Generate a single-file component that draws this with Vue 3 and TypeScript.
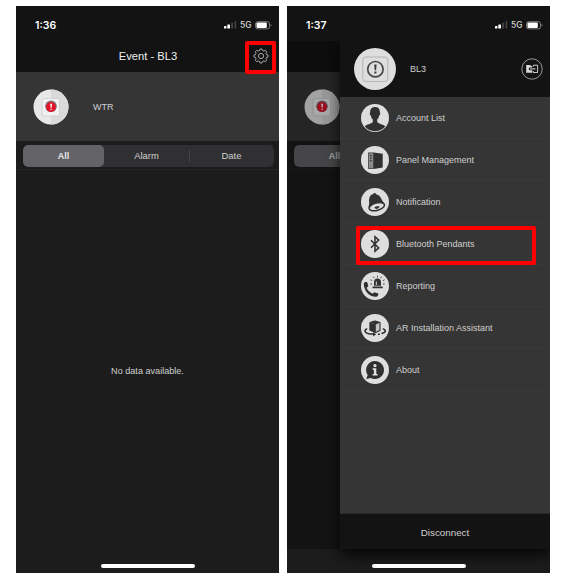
<script setup lang="ts">
type IconName = 'account' | 'panel' | 'bell' | 'bluetooth' | 'report' | 'ar' | 'about'

interface MenuItem {
  label: string
  icon: IconName
  marked?: boolean
}

const menu: MenuItem[] = [
  { label: 'Account List', icon: 'account' },
  { label: 'Panel Management', icon: 'panel' },
  { label: 'Notification', icon: 'bell' },
  { label: 'Bluetooth Pendants', icon: 'bluetooth', marked: true },
  { label: 'Reporting', icon: 'report' },
  { label: 'AR Installation Assistant', icon: 'ar' },
  { label: 'About', icon: 'about' },
]

interface Phone {
  time: string
  tabs: string[]
  drawer: boolean
}

// With the drawer open only the first filter tab stays visible.
const phones: Phone[] = [
  { time: '1:36', tabs: ['All', 'Alarm', 'Date'], drawer: false },
  { time: '1:37', tabs: ['All'], drawer: true },
]
</script>

<template>
  <main class="page">
    <section v-for="phone in phones" :key="phone.time" class="phone" :class="{ dimmed: phone.drawer }">
      <div class="status">
        <span class="time">{{ phone.time }}</span>
        <svg class="signal" width="13" height="8" viewBox="0 0 13 8">
          <rect x="0" y="5" width="2.4" height="2.6" rx=".4" fill="#fff" />
          <rect x="3.300" y="3.600" width="2.700" height="4" rx=".4" fill="#fff" />
          <rect x="7.200" y="1.800" width="1.900" height="5.800" rx=".5" fill="#444" />
          <rect x="10.600" y="0" width="1.600" height="7.600" rx=".5" fill="#444" />
        </svg>
        <span class="net">5G</span>
        <svg class="battery" width="17" height="9" viewBox="0 0 17 9">
          <rect x=".5" y=".7" width="14" height="7.2" rx="2.2" fill="none" stroke="#888" stroke-width=".9" />
          <rect x="1.5" y="1.5" width="10.3" height="5.6" rx="1.1" fill="#fff" />
          <path d="M15.6 3v2.7q1-.4 1-1.35T15.6 3" fill="#777" />
        </svg>
      </div>

      <div class="screen">
        <header class="titlebar">
          <h1 v-if="!phone.drawer">Event - BL3</h1>
          <div v-if="!phone.drawer" class="gear-box">
            <svg width="16" height="16" viewBox="0 0 16 16" fill="none" stroke="#b5b5b5" stroke-width=".9">
              <path
                stroke-linejoin="round"
                d="M7 1h2l.4 1.500 1.500.6 1.400-.8 1.400 1.400-.8 1.400.6 1.500L15 7v2l-1.500.4-.6 1.500.8 1.400-1.400 1.400-1.400-.8-1.500.6L9 15H7l-.4-1.500-1.500-.6-1.400.8-1.400-1.400.8-1.400-.6-1.500L1 9V7l1.500-.4.6-1.500-.8-1.400 1.400-1.400 1.400.8 1.500-.6z"
              />
              <circle cx="8" cy="8" r="2.6" />
            </svg>
          </div>
        </header>

        <div class="device">
          <svg width="36" height="36" viewBox="0 0 36 36">
            <circle cx="18" cy="18" r="17.5" fill="#e8e8e8" />
            <path d="M18 .5a17.5 17.5 0 0 1 0 35z" fill="#dadada" />
            <rect x="9" y="9.5" width="17.5" height="17.5" rx="2" fill="#f1f1f1" stroke="#c9c9c9" stroke-width=".7" />
            <circle cx="18" cy="17.3" r="5.8" fill="#777" />
            <circle cx="18" cy="18" r="4.9" fill="#e5142d" />
            <path d="M17.2 14.7h1.9l-.5 4h-1zM17.5 19.8h1.2V21h-1.2z" fill="#fff" />
          </svg>
          <span v-if="!phone.drawer">WTR</span>
        </div>

        <div class="filter">
          <div class="segments">
            <span v-for="tab in phone.tabs" :key="tab" class="segment">{{ tab }}</span>
          </div>
        </div>

        <div class="empty"><span v-if="!phone.drawer">No data available.</span></div>
      </div>

      <div class="home"><i></i></div>

      <aside v-if="phone.drawer" class="drawer">
        <div class="profile">
          <svg width="42" height="42" viewBox="0 0 42 42">
            <circle cx="21" cy="21" r="21" fill="#dedede" />
            <rect x="8.8" y="9" width="25" height="24.5" rx="3" fill="none" stroke="#b5b5b5" />
            <circle cx="21.4" cy="21.2" r="7.7" fill="none" stroke="#484848" stroke-width="1.7" />
            <path d="M20.2 16.6h2.4l-.5 5.6h-1.4zM20.4 23.4h2v2h-2z" fill="#383838" />
          </svg>
          <span>BL3</span>
          <svg class="switch" width="22" height="22" viewBox="0 0 22 22">
            <circle cx="11" cy="11" r="10.2" fill="none" stroke="#a6a6a6" stroke-width=".9" />
            <path d="M5.200 7h4l.8 1h1.200v1.600H9.300q-1.600 0-1.600 1.300t1.600 1.300h1.900v2.500h-6z" fill="#d8d8d8" />
            <path d="M12.300 8.700V7.200h4.300v7.300h-4.300V13" fill="none" stroke="#ccc" stroke-width="1" />
            <path d="M9 10.900h5.500" stroke="#ccc" stroke-width="1.100" />
          </svg>
        </div>

        <nav class="menu">
          <div v-for="item in menu" :key="item.icon" class="item" :class="{ marked: item.marked }">
            <svg width="28" height="28" viewBox="0 0 28 28">
              <circle cx="14" cy="14" r="14" fill="#dedede" />
              <g v-if="item.icon === 'account'" fill="#303030">
                <path d="M14 3c-3.4 0-5.2 2.1-4.8 5.500-.8.2-.4 2.700.6 3 .3 2 1.100 3.200 2 4v2.400c-1.700 2.200-5.800 2.200-8.200 4.400 5.200 6.500 15.600 6.500 20.800 0-2.400-2.200-6.500-2.200-8.200-4.400v-2.400c.9-.8 1.700-2 2-4 1-.3 1.400-2.800.6-3C19.200 5.100 17.400 3 14 3z" />
              </g>
              <g v-else-if="item.icon === 'panel'">
                <rect x="7.500" y="6.900" width="5" height="15.600" fill="#8a8a8a" stroke="#404040" stroke-width=".8" />
                <path d="M9 9h1.600v1.200H9zm0 2.500h1.600v1.200H9zm0 2.500h1.600v1.200H9z" fill="#333" />
                <path d="M12.600 6.400 21.700 7.800v13.700l-9.100 1.500z" fill="#303030" />
              </g>
              <g v-else-if="item.icon === 'bell'">
                <path d="M7.800 20.200c-.8-1.500.7-2.800.4-5.600C7.700 9.600 9 6.900 12.200 6c.3-1.400 2.600-1.200 2.900.2 4 .9 4.900 4 6.200 6.600.9 1.600 2.600 2.200 2.400 4z" fill="#303030" />
                <ellipse cx="15.800" cy="18.700" rx="7.900" ry="3.700" transform="rotate(-15 15.800 18.700)" fill="#dedede" stroke="#303030" stroke-width="1.500" />
                <path d="M13.300 19.600c1.300-1.300 3.900-1.700 5.400-1-1 2.600-4.500 3.200-5.400 1z" fill="#303030" />
              </g>
              <path v-else-if="item.icon === 'bluetooth'" d="m10 10.300 7.700 7.600-3.700 3.400V6.700l3.700 3.400-7.700 7.600" fill="none" stroke="#303030" stroke-width="1.500" />
              <g v-else-if="item.icon === 'report'">
                <path d="M2.800 11.200c.5-1 1.900-1.500 3.300-1.100l1.300 4.200-1.800 1.500c1.100 2.700 3.200 4.700 5.900 5.900l1.700-1.500 4.100 1.400c.2 1.700-.4 2.900-1.900 3.100C8.600 25.200 2.500 18.600 2.800 11.200z" fill="#303030" />
                <path d="M13 13.800V10a3.500 3.500 0 0 1 7 0v3.800zM11.500 14.600h10.200v1.700H11.500z" fill="#303030" />
                <path d="M15.300 13V9.600" stroke="#ddd" stroke-width="1" />
                <path d="M16.500 3.700v1.700M12.400 4.700l.9 1.500M20.600 4.700l-.9 1.500M9.500 7.800l1.600.8M23.500 7.800l-1.600.8M9.400 12h1.600M22 12h1.600" stroke="#303030" stroke-width=".9" />
              </g>
              <g v-else-if="item.icon === 'ar'">
                <path d="m14 7 5 1.600v7.900l-4.300 2-5.700-2.200V8.600z" fill="#c4c4c4" stroke="#303030" stroke-width="1.100" stroke-linejoin="round" />
                <path d="m8.800 8.800 6 1.800v8l-6-2.300zM14 7l5 1.600-4.200 1.900L9 8.600z" fill="#303030" />
                <path d="M6.200 14.600C2.600 16.200 3.300 19 8.800 20.100h3.800M16.900 20.200h2M20.500 19.600c4.600-1.100 5-3.400 1.300-5" fill="none" stroke="#303030" stroke-width="1.500" />
                <path d="m12 17.900 3.200 2.300-3.200 2.300z" fill="#303030" />
              </g>
              <g v-else>
                <path d="M14 5a9 9 0 1 1-4.300 16.900L5.200 23l1.500-3.900A9 9 0 0 1 14 5z" fill="#303030" />
                <circle cx="14" cy="9.600" r="1.600" fill="#e2e2e2" />
                <path d="M11.700 12.200h3.600v5.700h1.300v1.700h-5v-1.700h1.300v-4h-1.200z" fill="#e2e2e2" />
              </g>
            </svg>
            <span>{{ item.label }}</span>
          </div>
        </nav>

        <div class="disconnect">Disconnect</div>
      </aside>
    </section>
  </main>
</template>

<style>
body {
  background: #fff;
}
</style>

<style scoped>
.page {
  box-sizing: border-box;
  display: flex;
  gap: 8px;
  height: 582px;
  padding: 6px 0 9px 16px;
  overflow: hidden;
  font: 9px "Liberation Sans", Arial, sans-serif;
  color: #d0d0d0;
}
.phone {
  position: relative;
  display: flex;
  flex-direction: column;
  width: 263px;
  height: 567px;
  overflow: hidden;
  background: #1c1c1c;
}
.status {
  display: flex;
  align-items: center;
  box-sizing: border-box;
  height: 35px;
  padding: 3px 7px 0 19px;
  background: #131313;
  color: #fff;
}
.time {
  flex: 1;
  font: 600 10.5px Inter, sans-serif;
}
.signal {
  margin-right: 3px;
}
.net {
  width: 14px;
  font: 500 8.4px Inter, sans-serif;
  color: #ddd;
}
.battery {
  margin-left: 1px;
}
.screen {
  position: relative;
  display: flex;
  flex-direction: column;
  height: 508px;
}
.titlebar {
  position: relative;
  height: 31px;
  background: #131313;
}
h1 {
  margin: 0;
  padding-left: 1px;
  font-size: 11.2px;
  font-weight: 400;
  line-height: 31px;
  text-align: center;
  color: #eee;
}
.gear-box {
  position: absolute;
  z-index: 2;
  top: 0;
  right: 3px;
  box-sizing: border-box;
  display: flex;
  align-items: center;
  justify-content: center;
  width: 31px;
  height: 33px;
  padding-bottom: 4px;
  border: 4px solid #fe0000;
  border-radius: 2px;
}
.device {
  display: flex;
  align-items: center;
  gap: 24px;
  height: 69px;
  padding-left: 17px;
  background: #353535;
}
.filter {
  box-sizing: border-box;
  height: 29px;
  padding: 4px 5px 2px 7px;
  border-bottom: 1px solid #252525;
}
.segments {
  display: grid;
  grid-template-columns: 81px 85px 1fr;
  height: 22px;
  border-radius: 5px;
  background: #303032;
  overflow: hidden;
}
.segment {
  position: relative;
  font-size: 9.4px;
  line-height: 22px;
  text-align: center;
}
.segment:first-child {
  border-radius: 5px;
  background: #636366;
  font-size: 9px;
  font-weight: 700;
  color: #e6e6e6;
}
.segment:last-child:not(:first-child)::before {
  content: "";
  position: absolute;
  left: 0;
  top: 5px;
  height: 12px;
  border-left: 1px solid #444446;
}
.empty {
  flex: 1;
  padding-top: 196px;
  text-align: center;
  font-size: 9.1px;
}
.home {
  display: flex;
  justify-content: center;
  padding-top: 15px;
}
.home i {
  width: 94px;
  height: 4px;
  border-radius: 2px;
  background: #fff;
}
.dimmed .screen::after {
  content: "";
  position: absolute;
  inset: 0;
  background: rgba(0, 0, 0, 0.3);
}
.drawer {
  position: absolute;
  z-index: 2;
  top: 35px;
  right: 0;
  display: flex;
  flex-direction: column;
  width: 210px;
  height: 508px;
  background: #353535;
  box-shadow: 0 7px 12px rgba(0, 0, 0, 0.75);
  clip-path: inset(0 0 -30px -30px);
}
.dimmed .home {
  position: relative;
  z-index: 3;
}
.profile {
  display: flex;
  align-items: center;
  box-sizing: border-box;
  height: 56px;
  padding: 0 7px 0 14px;
  background: #131313;
}
.profile span {
  flex: 1;
  margin-left: 14px;
}
.menu {
  flex: 1;
}
.item {
  position: relative;
  box-sizing: border-box;
  display: flex;
  align-items: center;
  gap: 7.5px;
  height: 42px;
  padding-left: 20.5px;
  border-bottom: 1px solid #393939;
}
.marked::after {
  content: "";
  position: absolute;
  left: 16px;
  top: 3px;
  box-sizing: border-box;
  width: 180px;
  height: 39px;
  border: 4px solid #fe0000;
  border-radius: 2px;
}
.disconnect {
  height: 35px;
  border-top: 1px solid #292929;
  background: #131313;
  font-size: 9.8px;
  line-height: 37px;
  text-align: center;
}
</style>
